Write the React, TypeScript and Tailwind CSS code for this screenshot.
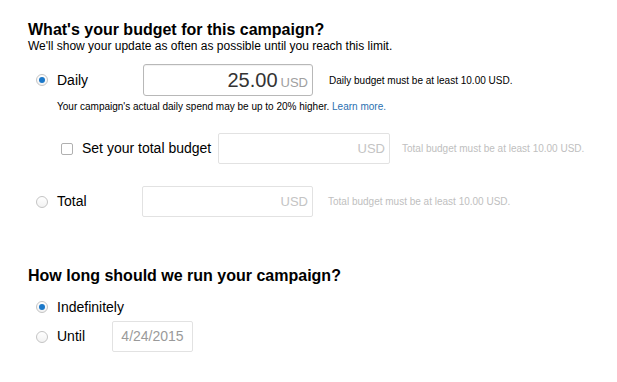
import React from "react";

function Radio({ checked }: { checked?: boolean }) {
  return (
    <span className="relative flex h-[12px] w-[12px] shrink-0 items-center justify-center rounded-full border border-[#c4c4c4] bg-gradient-to-b from-white to-[#f2f2f2]">
      {checked && <span className="h-[6px] w-[6px] rounded-full bg-[#1b78c9]" />}
    </span>
  );
}

export default function App() {
  return (
    <div
      className="w-[617px] h-[382px] bg-white pl-[28px] pt-[21px] text-black"
      style={{ fontFamily: '"Liberation Sans", Arial, sans-serif' }}
    >
      <h2 className="text-[16px] font-bold leading-[18px]">What's your budget for this campaign?</h2>
      <p className="text-[12px] leading-[14px]">
        We'll show your update as often as possible until you reach this limit.
      </p>

      {/* Daily */}
      <div className="mt-[11px] flex h-[32px] items-center">
        <div className="ml-[8px] flex w-[107px] items-center">
          <Radio checked />
          <span className="ml-[9px] text-[14px]">Daily</span>
        </div>
        <div className="flex h-[32px] w-[170px] items-baseline justify-end rounded-[3px] border border-[#b8b8b8] bg-white pr-[4px] pt-[3px] shadow-[inset_0_1px_1px_rgba(0,0,0,0.06)]">
          <span className="text-[20px] leading-[24px] text-[#333]">25.00</span>
          <span className="ml-[3px] text-[13px] text-[#a0a0a0]">USD</span>
        </div>
        <span className="ml-[16px] text-[10px]">Daily budget must be at least 10.00 USD.</span>
      </div>
      <p className="ml-[29px] mt-[5px] text-[10px] leading-[12px]">
        Your campaign's actual daily spend may be up to 20% higher.{" "}
        <span className="text-[#2a6fb0]">Learn more.</span>
      </p>

      {/* Set total budget */}
      <div className="mt-[20px] flex h-[31px] items-center">
        <span className="ml-[33px] h-[12px] w-[12px] shrink-0 rounded-[2px] border border-[#b0b0b0] bg-white" />
        <span className="ml-[9px] w-[136px] text-[14px]">Set your total budget</span>
        <div className="flex h-[31px] w-[172px] items-center justify-end rounded-[2px] border border-[#e2e2e2] bg-white pr-[4px]">
          <span className="text-[13px] text-[#c4c4c4]">USD</span>
        </div>
        <span className="ml-[12px] text-[10px] text-[#c0c0c0]">Total budget must be at least 10.00 USD.</span>
      </div>

      {/* Total */}
      <div className="mt-[22px] flex h-[31px] items-center">
        <div className="ml-[8px] flex w-[106px] items-center">
          <Radio />
          <span className="ml-[9px] text-[14px]">Total</span>
        </div>
        <div className="flex h-[31px] w-[171px] items-center justify-end rounded-[2px] border border-[#e2e2e2] bg-white pr-[4px]">
          <span className="text-[13px] text-[#c4c4c4]">USD</span>
        </div>
        <span className="ml-[15px] text-[10px] text-[#c0c0c0]">Total budget must be at least 10.00 USD.</span>
      </div>

      <h2 className="mt-[49px] text-[16px] font-bold leading-[19px]">How long should we run your campaign?</h2>

      <div className="mt-[12px] flex h-[20px] items-center">
        <span className="ml-[8px]">
          <Radio checked />
        </span>
        <span className="ml-[9px] text-[14px]">Indefinitely</span>
      </div>

      <div className="mt-[4px] flex h-[31px] items-center">
        <div className="ml-[8px] flex w-[76px] items-center">
          <Radio />
          <span className="ml-[9px] text-[14px]">Until</span>
        </div>
        <div className="flex h-[31px] w-[81px] items-center justify-center rounded-[2px] border border-[#e2e2e2] bg-white">
          <span className="text-[14px] text-[#9a9a9a]">4/24/2015</span>
        </div>
      </div>
    </div>
  );
}
